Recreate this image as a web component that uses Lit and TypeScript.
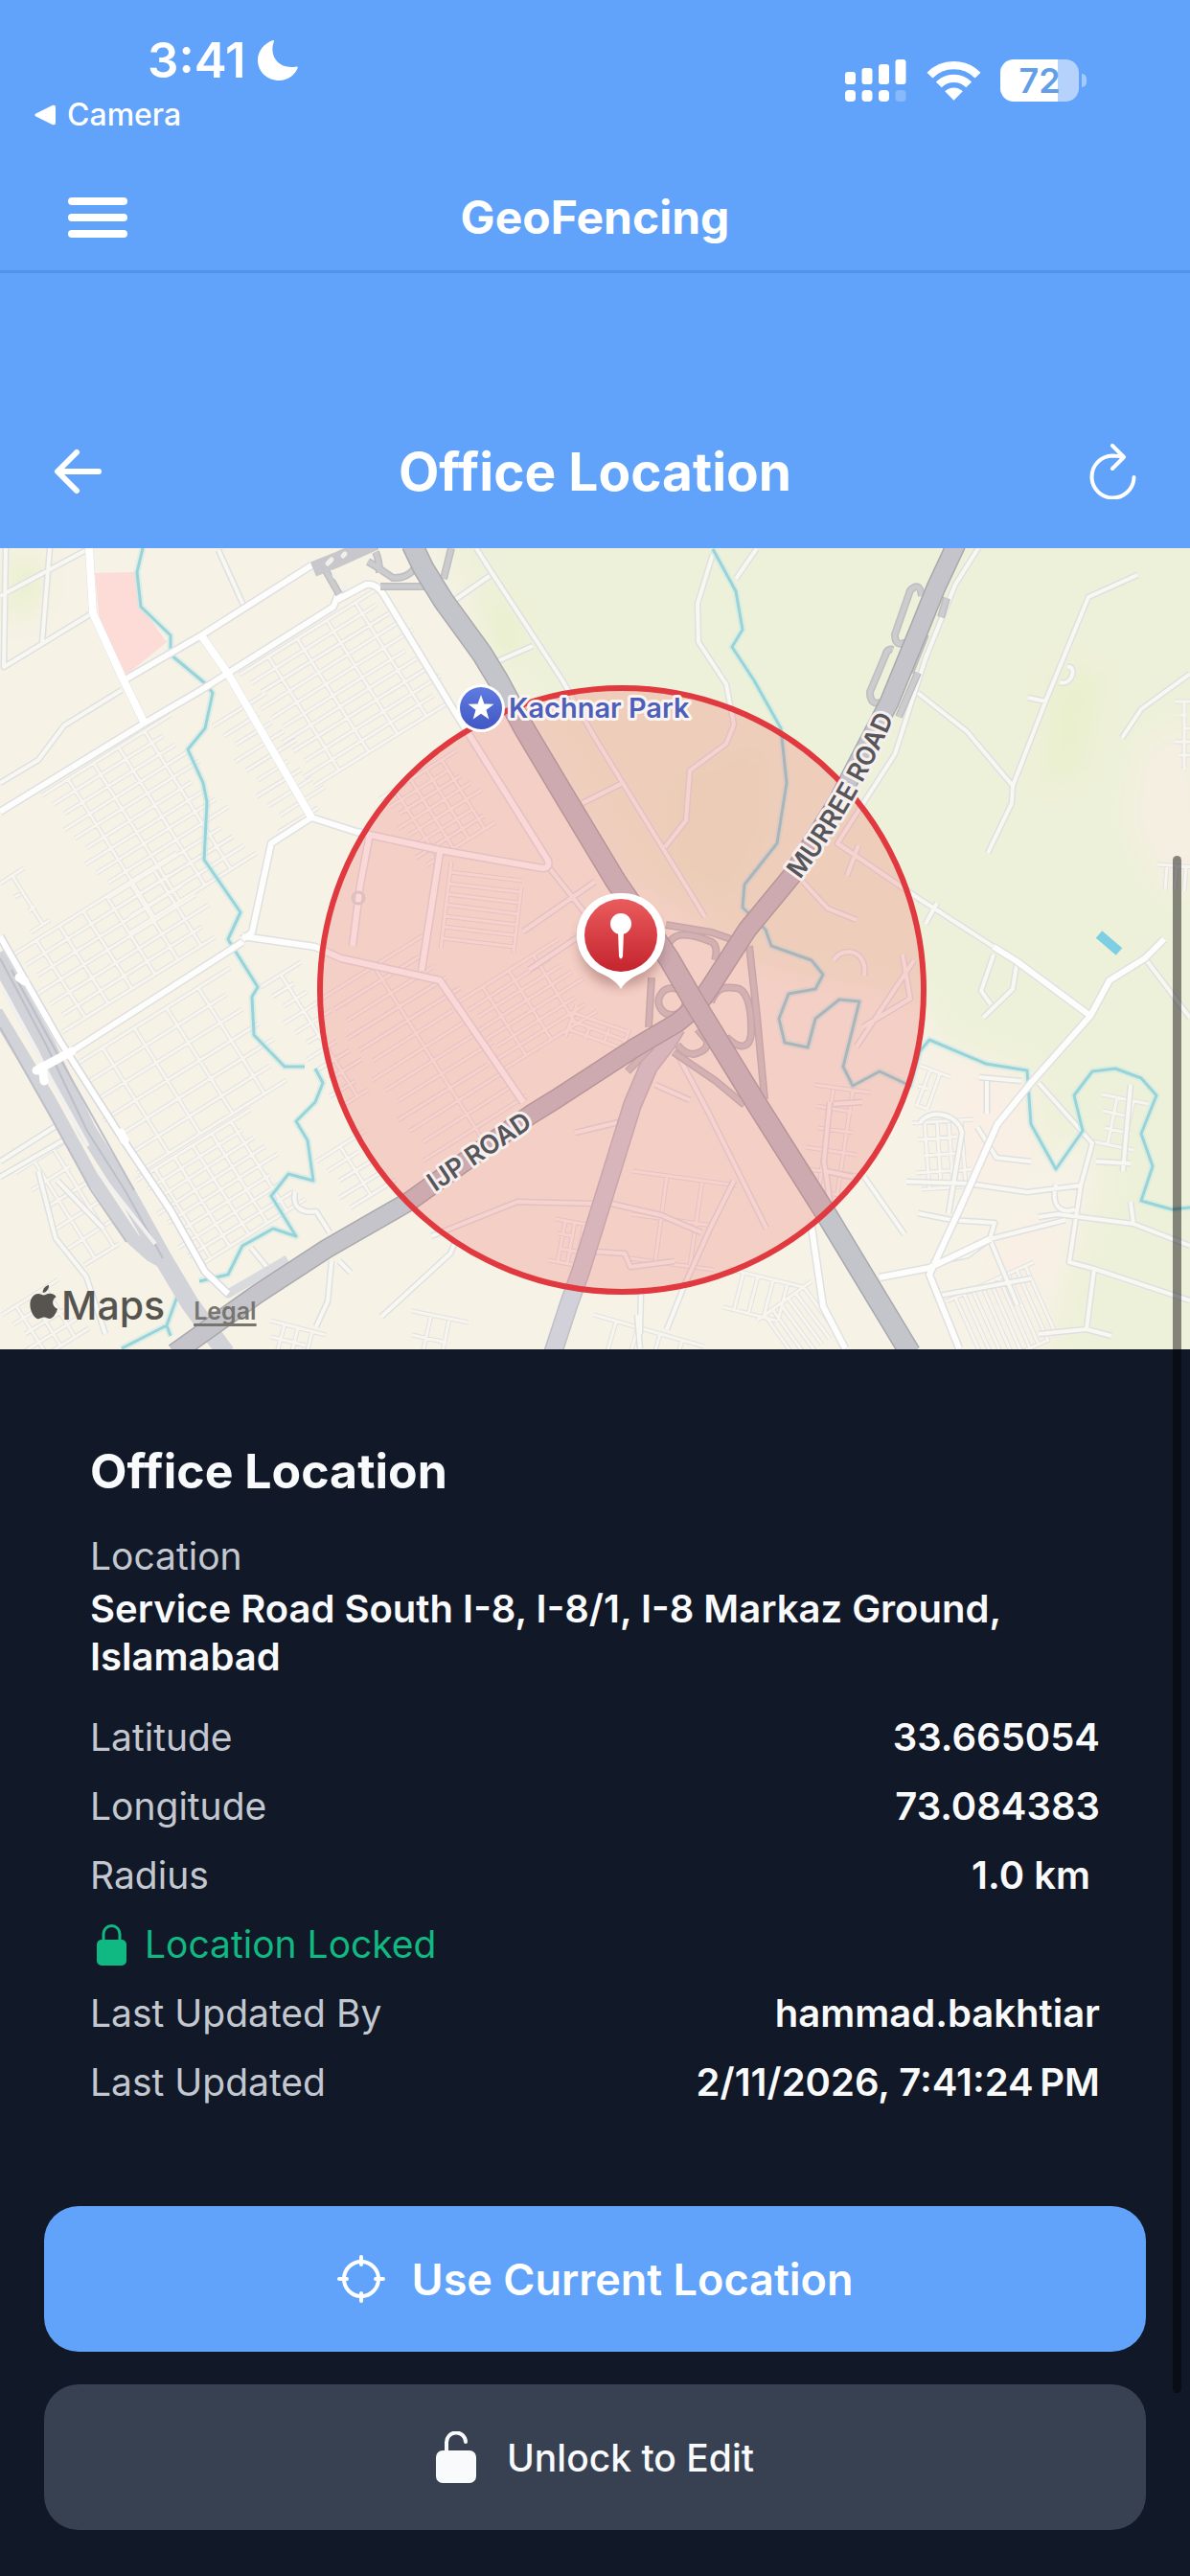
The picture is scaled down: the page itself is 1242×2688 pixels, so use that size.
import { LitElement, html, css, svg } from 'lit';
import { customElement, property } from 'lit/decorators.js';

type Block = [x: number, y: number, width: number, height: number, cols: number, rows: number, angle?: number];

// Residential blocks: origin, size, number of cross streets and of streets.
const BLOCKS: Block[] = [
  [250, 132, 178, 140, 4, 11],
  [44, 258, 158, 170, 4, 13],
  [222, 186, 66, 130, 0, 10],
  [396, 262, 96, 84, 4, 8],
  [336, 470, 128, 216, 1, 14],
  [478, 474, 124, 84, 3, 8],
  [460, 418, 92, 76, 7, 2, -83],
  [14, 424, 200, 96, 6, 7],
  [74, 542, 196, 130, 4, 7],
  [142, 660, 140, 110, 5, 9],
  [16, 652, 70, 120, 2, 6],
  [272, 458, 50, 150, 1, 11],
  [330, 640, 60, 60, 1, 5],
  [2, 800, 70, 60, 3, 5],
  [282, 806, 60, 50, 3, 4, 14],
  [430, 796, 60, 50, 2, 3, 12],
  [0, 350, 30, 60, 1, 4],
  [850, 560, 60, 110, 2, 6, 8],
  [952, 600, 64, 70, 4, 5, -4],
  [960, 540, 34, 40, 2, 3, 20],
  [1150, 570, 50, 50, 2, 4, 12],
  [988, 786, 100, 80, 9, 2, -24],
  [760, 752, 80, 40, 4, 2, 14],
  [660, 650, 110, 90, 2, 3, 8],
  [580, 700, 40, 44, 3, 4, 10],
  [620, 800, 120, 50, 4, 2, 16],
  [790, 806, 70, 60, 6, 1, -36],
  [1226, 160, 30, 70, 2, 6, 0],
  [1208, 330, 40, 26, 3, 1, 4],
  [590, 510, 36, 60, 3, 4, -70],
];

const LANES = [
  'M0 245 40 221 67 185 127 148', 'M497 0 513 25 587 138 621 198 736 385', 'M472 56 511 29', 'M519 118 556 102',
  'M228 2 257 66', 'M0 50 90 2', 'M6 0 4 124 96 68', 'M52 0 44 98',
  'M744 6 728 58 729 98 758 142 766 184 758 204 720 232 716 284 694 312', 'M790 0 768 32',
  'M608 266 648 246', 'M1021 0 997 38 966 115 934 215 874 308 958 365 1037 416',
  'M958 151 1009 191 1057 248 1056 266 1031 318', 'M1057 248 1092 158 1136 51 1187 28', 'M1073 156 1092 160',
  'M1106 140C1120 144 1124 122 1114 124', 'M1242 131 1191 168 1171 198', 'M896 310 884 342',
  'M838 348 864 376 894 388', 'M1037 424 1024 462 1034 476', 'M1061 434 1057 460 1026 490', 'M978 370 966 392',
  'M1195 428 1242 490', 'M942 424 950 470 900 500', 'M946 661 1010 663 1072 672 1128 665 1140 621 1084 558',
  'M1128 665 1116 745 1142 752 1242 785', 'M1142 752 1134 815', 'M1084 820 1134 815 1160 822',
  'M993 701 1038 704 1033 721 1062 790', 'M1084 698 1104 695 1183 705 1242 728', 'M1183 705 1180 682',
  'M1112 701 1033 721 1010 738 972 746', 'M980 780 1076 762', 'M902 656 944 716', 'M993 701 958 694',
  'M866 578 860 640 866 680 862 650 890 656', 'M870 580 900 578', 'M708 530 740 590 770 650 800 710',
  'M684 560 720 576', 'M766 660 742 708 714 770 696 815', 'M621 680 690 696 732 714', 'M621 734 652 736 658 750 704 744',
  'M450 718 540 682 621 684', 'M398 802 470 736 476 722', 'M354 744 366 756', 'M346 744 342 786 330 812',
  'M40 650 58 720 90 760 110 820', 'M60 660 108 710', 'M0 640 60 602', 'M0 656 66 618',
  'M308 672 C304 690 318 694 330 692 L344 714', 'M262 730 290 764', 'M1020 604 1040 636 1076 640',
  'M960 600 C970 584 1000 590 1004 610 L990 694', 'M1102 664C1096 690 1110 694 1122 690', 'M1030 556 1030 590',
  'M1022 552 1066 556', 'M1180 560 1172 650', 'M1144 640 1180 642', 'M870 430C880 414 906 420 902 446', 'M954 430 894 520',
  'M546 400 621 348', 'M552 440 606 404', 'M572 332 610 380', 'M600 610 650 598', 'M665 800 668 835', 'M669 776 668 820',
];

const STREETS = [
  'M0 275 150 183 210 148 348 61 356 41', 'M129 138 210 91 325 18', 'M325 281 283 308 263 401 253 408',
  'M325 281 372 296 459 315 566 334Q574 334 572 326L473 168 400 48Q392 36 382 38L352 54', 'M253 405 329 416 356 428 459 451 546 578',
  'M386 298 376 351 368 415', 'M459 318 440 441', 'M253 411 75 525 44 541', 'M847 708 859 791 882 835',
  'M1215 408 1195 428 1158 451 1138 488 1076 558 1041 601 1001 691 970 758 1001 835',
  'M1037 416 1061 431 1138 488', 'M918 761 970 751 1033 721',
];

const AVENUES = 'M93 0 97 68 129 138 150 181M210 91 238 131 325 281';

const RAMPS = [
  'M695 393 743 401 763 408', 'M695 420C700 402 712 398 743 411Q750 416 746 430', 'M782 415 790 488 798 575',
  'M742 474C748 456 760 458 768 459C780 460 784 480 784 500C785 524 772 524 758 510', 'M680 448 677 500',
  'M707 518Q714 528 724 528Q740 524 738 514L728 502', 'M703 526 747 556 777 581',
  'M702 459A14 14 0 1 1 701 459Z', 'M655 546 680 520',
  'M384 14 394 20 410 31Q424 32 432 22', 'M392 4Q396 12 396 26', 'M397 40 447 40', 'M471 0 463 32',
  'M338 20 354 48',
];

const LAY_BYS = 'M962 50Q960 34 950 44L934 90Q934 104 946 98M932 106Q926 104 924 112L908 150Q908 166 922 160M988 52 982 72M958 130 938 176M966 90 950 130';

const RIVERS = [
  'M149 0 143 25 147 61 178 91 178 111 214 141 222 151 214 188 196 210 212 245 216 265 213 325 251 380 238 408 246 421 269 458 263 468 265 508 297 541 318 541M329 543 337 558 329 578 309 598 321 618 327 660 301 653 283 676 309 718 285 710 253 728 238 758 208 765M186 778 174 811 127 835M174 811 178 822',
  'M744 1 768 45 775 85 764 103 787 138 815 188 821 245 811 308 777 351 775 375 799 398 805 415 847 430 859 445 851 460 823 465 813 491 819 516 843 521 851 491 876 471 897 473 890 501 880 541 890 561 918 546 950 561 960 525 970 513 1029 538 1072 545 1076 601 1102 648 1130 608 1121 571 1140 546 1164 543 1191 553 1207 571 1191 611 1203 645 1191 681 1223 690 1242 688',
];

const HIGHWAY = 'M430 -4 442 21 463 55 503 110 520 138 547 188 587 255 643 348 698 428 723 471 791 582 863 696 950 840';
const MURREE_ROAD = 'M998 -4 977 41 958 88 928 161 874 265 827 341 780 398 740 460Q727 480 707 495L663 521 580 575 554 591 428 681 341 731 269 778 182 840';
const SOUTH_ROAD = 'M706 500 697 515 677 541 660 581 633 668 606 755 594 788 577 840';

function blockPath([x, y, width, height, cols, rows, angle = -32]: Block) {
  const a = (angle * Math.PI) / 180;
  const ux = Math.cos(a);
  const uy = Math.sin(a);
  const point = (u: number, v: number) => `${Math.round(x + ux * u - uy * v)} ${Math.round(y + uy * u + ux * v)}`;
  let d = '';
  for (let i = 0; i < rows; i++) {
    const v = (height * i) / Math.max(rows - 1, 1);
    // ragged ends, so that a block does not read as a perfect grid
    d += `M${point((i % 3) * 5, v)}L${point(width - ((i * 7) % 4) * 6, v)}`;
  }
  for (let i = 0; i < cols; i++) {
    const u = (width * (i + 1)) / (cols + 1);
    d += `M${point(u, 0)}L${point(u, height)}`;
  }
  return d;
}

@customElement('geofence-map')
export class GeofenceMap extends LitElement {
  @property() place = '';

  static styles = css`
    :host {
      display: block;
      position: relative;
      overflow: hidden;
      background: #f6f2e6;
    }

    .map {
      display: block;
      width: 100%;
    }

    .line {
      fill: none;
      stroke-linejoin: round;
    }

    .place-name,
    .road-name {
      font-weight: 600;
      stroke-width: 6px;
      stroke-linejoin: round;
      paint-order: stroke;
    }

    .place-name {
      font-size: 29px;
      fill: #4c5fbd;
      stroke: #fbf4f0;
    }

    .road-name {
      font-size: 27px;
      fill: #55555a;
      stroke: #f6efee;
    }

    .attribution {
      position: absolute;
      left: 31px;
      bottom: 20px;
      display: flex;
      align-items: baseline;
      color: #55544f;
    }

    .apple {
      width: 29px;
      height: 36px;
      margin-right: 4px;
    }

    .brand {
      font-size: 41px;
      line-height: 52px;
      font-weight: 500;
    }

    .legal {
      margin-left: 30px;
      padding-bottom: 4px;
      font-size: 25px;
      font-weight: 600;
      color: #77756f;
      text-decoration-thickness: 3px;
      text-underline-offset: 4px;
      text-decoration-skip-ink: none;
    }
  `;

  render() {
    const blocks = BLOCKS.map(blockPath).join('');
    const lanes = LANES.join('');
    const streets = STREETS.join('');
    const ramps = RAMPS.join('');
    const rivers = RIVERS.join('');
    return html`
      <svg class="map" viewBox="0 0 1242 836" role="img" aria-label="Map of the office geofence">
        <defs>
          <linearGradient id="pin" x1="0" y1="0" x2="0" y2="1">
            <stop offset="0" stop-color="#ea5c5e" />
            <stop offset="1" stop-color="#c4242d" />
          </linearGradient>
          <linearGradient id="badge" x1="0" y1="0" x2="0" y2="1">
            <stop offset="0" stop-color="#5f7be0" />
            <stop offset="1" stop-color="#4157c4" />
          </linearGradient>
          <filter id="soft" x="-20%" y="-20%" width="140%" height="140%">
            <feGaussianBlur stdDeviation="14" />
          </filter>
          <filter id="shadow" x="-50%" y="-50%" width="200%" height="200%">
            <feGaussianBlur stdDeviation="6" />
          </filter>
          <path id="murree" d="M835 346Q898 262 940 160" />
        </defs>
        ${svg`
          <g filter="url(#soft)">
            <path fill="#eef1d9" d="M440 -40 560 190 650 340 740 400 800 440 960 470 980 516 1072 545 1090 640 1130 610 1150 660 1110 760 1080 880 1300 880 1300 -40Z" />
            <path fill="#ebeed2" d="M700 240 800 200 800 300 760 370 700 330Z" />
            <path fill="#e9f0cd" d="M500 50 540 70 540 130 510 110ZM8 6 46 10 40 60 8 80ZM1100 130 1150 130 1130 230 1090 250Z" />
            <path fill="#f5efe2" d="M1242 180 1190 210 1180 290 1220 360 1260 360Z" />
            <path fill="#f9efe4" d="M980 530 1070 556 1084 640 1000 670ZM1040 720 1110 700 1090 770 1030 780Z" />
          </g>
          <path fill="#fddcd8" d="M99 26 135 25 143 25 147 61 174 98 131 133 105 88Z" />

          <g class="line">
            <path stroke="#e2e1e4" stroke-width="5" d="${blocks}" />
            <path stroke="#f8f5ed" stroke-width="3" d="${blocks}" />
            <path stroke="#dfe0e3" stroke-width="7" d="${lanes}" />
            <path stroke="#f8f7f0" stroke-width="4" d="${lanes}" />
            <path stroke="#c6e9e7" stroke-width="7" opacity="0.5" d="${rivers}" />
            <path stroke="#97d3d9" stroke-width="3" d="${rivers}" />
            <path stroke="#e0e0e3" stroke-width="9" d="${streets}${AVENUES}" />
            <path stroke="#fdfdfc" stroke-width="6" d="${streets}" />
            <path stroke="#ffffff" stroke-width="8" d="${AVENUES}" />
            <circle cx="374" cy="365" r="6" stroke="#dedce2" stroke-width="3" />

            <path stroke="#d2d2d9" stroke-width="19" d="M-4 424 48 518 91 608 131 671 170 741 198 788 236 840" />
            <path stroke="#d2d2d9" stroke-width="14" d="M-4 484 51 575 95 655 139 721 158 738 176 748" />
            <path stroke="#bebec8" stroke-width="2" d="M0 428 48 518 91 608 131 671 170 741M12 440 60 528 140 670M0 500 51 590 95 670 132 724" />
            <path stroke="#f1f0ee" stroke-width="4" d="M4 462 52 552 92 624M102 650 162 726" />
            <path stroke="#d9dade" stroke-width="9" d="M0 405 63 515 127 615 178 691 214 755 238 778 300 742" />
            <path stroke="#ffffff" stroke-width="6" d="M0 405 63 515 127 615 178 691 214 755 238 778" />
            <path stroke="#ffffff" stroke-width="9" stroke-linecap="round" d="M75 525 38 545M44 541 46 556M20 448 26 452M126 610 130 618" />

            <path stroke="#bfbfc6" stroke-width="20" d="${SOUTH_ROAD}" />
            <path stroke="#d2d1d9" stroke-width="17" d="${SOUTH_ROAD}" />
            <path stroke="#bebdc0" stroke-width="8" d="${ramps}${LAY_BYS}" />
            <path stroke="#cccbce" stroke-width="5" d="${ramps}${LAY_BYS}" />
            <path stroke="#c8c8cc" stroke-width="16" d="M327 22 352 12 392 -6" />
            <path stroke="#f1f0ea" stroke-width="5" stroke-linecap="round" d="M342 16 346 12M349 28 350 30M358 8 360 6M358 42 360 40" />
            <path stroke="#a9a9ae" stroke-width="21" d="${MURREE_ROAD}" />
            <path stroke="#c4c4ca" stroke-width="18" d="${MURREE_ROAD}" />
            <path stroke="#a9a9ae" stroke-width="23" d="${HIGHWAY}" />
            <path stroke="#c4c4cb" stroke-width="20" d="${HIGHWAY}" />
            <path stroke="#7fcfe4" stroke-width="10" d="M1147 403 1168 421" />
          </g>

          <circle cx="649" cy="461" r="315" fill="#f04444" fill-opacity="0.2" stroke="#e0393f" stroke-width="6" />

          <text class="road-name"><textPath href="#murree">MURREE ROAD</textPath></text>
          <text class="road-name" transform="translate(454 672) rotate(-34)">IJP ROAD</text>

          <circle cx="502" cy="167" r="25" fill="#fff" />
          <circle cx="502" cy="167" r="22" fill="url(#badge)" />
          <path fill="#fff" d="M502 153 505.400 162.500 515.500 162.700 507.500 168.800 510.300 178.500 502 172.800 493.700 178.500 496.500 168.800 488.500 162.700 498.600 162.500Z" />
          <text class="place-name" x="531" y="177">${this.place}</text>

          <circle cx="648" cy="414" r="44" fill="#5b2020" opacity="0.3" filter="url(#shadow)" />
          <path fill="#fff" d="M648 360A44 44 0 0 1 666 445C658 449 652 453 648 460C644 453 638 449 630 445A44 44 0 0 1 648 360Z" />
          <circle cx="648" cy="404" r="38" fill="url(#pin)" />
          <circle cx="648" cy="392" r="11" fill="#fff" />
          <path fill="#fff" d="M645 400H651L650 426Q648 431 646 426Z" />
        `}
      </svg>
      <div class="attribution">
        <svg class="apple" viewBox="0 0 29 36" aria-hidden="true">
          <path fill="currentColor" d="M20 0C20.300 4 17 8 13.800 8C13.300 4 16.500 .6 20 0ZM14.600 10.600C16.200 10.600 18 8.800 21 8.800C24 8.800 26.400 10.400 27.600 12.200C22.400 15.200 23.200 22.600 29 24.800C27.800 28.600 24.800 34.800 21.200 35C18.800 35.200 18 33.600 15.200 33.600C12.400 33.600 11.400 35.200 9.200 35.200C5.200 35.200 .4 27.600 .4 20.400C.4 13.200 4.600 9 8.800 9C11.400 9 13.200 10.600 14.600 10.600Z" />
        </svg>
        <span class="brand">Maps</span>
        <a class="legal" href="#legal">Legal</a>
      </div>
    `;
  }
}

@customElement('app-root')
export class AppRoot extends LitElement {
  @property({ type: Object }) office = {
    name: 'Office Location',
    address: 'Service Road South I-8, I-8/1, I-8 Markaz Ground, Islamabad',
    coordinates: [
      ['Latitude', '33.665054'],
      ['Longitude', '73.084383'],
      ['Radius', '1.0 km\u00a0'],
    ],
    updates: [
      ['Last Updated By', 'hammad.bakhtiar'],
      ['Last Updated', '2/11/2026, 7:41:24\u202fPM'],
    ],
  };

  static styles = css`
    :host {
      display: block;
      position: relative;
      min-height: 100vh;
      background: #111827;
      color: #f9fafb;
      font-family: Inter, 'Liberation Sans', sans-serif;
    }

    h1,
    h2,
    p,
    dl,
    dd {
      margin: 0;
    }

    button {
      display: flex;
      align-items: center;
      justify-content: center;
      border: 0;
      padding: 0;
      background: none;
      color: inherit;
      font: inherit;
    }

    svg {
      display: block;
      flex: none;
    }

    .top {
      background: #61a3fa;
      color: #fff;
    }

    .status {
      display: flex;
      justify-content: space-between;
      box-sizing: border-box;
      height: 172px;
      padding: 33px 108px 0 36px;
    }

    .clock {
      display: flex;
      align-items: center;
      gap: 12px;
      padding-left: 118px;
      font-size: 51px;
      line-height: 60px;
      font-weight: 600;
    }

    .back-to {
      display: flex;
      align-items: center;
      gap: 12px;
      color: inherit;
      text-decoration: none;
      font-size: 32px;
      line-height: 54px;
      font-weight: 500;
    }

    .indicators {
      display: flex;
      align-items: center;
      height: 102px;
    }

    .wifi {
      margin: 0 20px;
    }

    .battery {
      display: flex;
      align-items: center;
      justify-content: center;
      width: 82px;
      height: 44px;
      border-radius: 14px;
      background: linear-gradient(90deg, #fff 73%, #b4d2fc 73%);
      color: #629fe8;
      font-size: 36px;
      font-weight: 600;
    }

    .battery-cap {
      width: 5px;
      height: 14px;
      margin-left: 3px;
      border-radius: 0 5px 5px 0;
      background: #a4cafc;
    }

    .bar {
      display: grid;
      grid-template-columns: 64px 1fr 64px;
      align-items: center;
    }

    .app-bar {
      height: 110px;
      padding: 0 70px;
      border-bottom: 3px solid #5193e6;
    }

    .page-bar {
      height: 161px;
      padding: 126px 49px 0;
    }

    .bar h1,
    .bar h2 {
      text-align: center;
      font-weight: 700;
    }

    .app-bar h1 {
      font-size: 48px;
      line-height: 60px;
    }

    .page-bar h2 {
      font-size: 55px;
      line-height: 68px;
    }

    .details {
      padding: 97px 94px 105px;
      font-size: 40px;
      line-height: 48px;
    }

    .details h2 {
      margin-bottom: 35px;
      font-size: 50px;
      line-height: 60px;
      font-weight: 700;
    }

    .label,
    .locked {
      font-size: 39px;
    }

    .label {
      color: #c3c8d0;
    }

    .value {
      font-weight: 600;
    }

    .address {
      margin: 6px 0 35px;
      line-height: 50px;
    }

    .rows {
      display: grid;
      gap: 24px;
    }

    .row {
      display: flex;
      justify-content: space-between;
    }

    .locked {
      display: flex;
      align-items: center;
      gap: 19px;
      margin: 24px 0;
      padding-left: 7px;
      color: #10b981;
    }

    .actions {
      display: grid;
      gap: 34px;
      padding: 0 46px 48px;
    }

    .actions button {
      height: 152px;
      border-radius: 36px;
    }

    .actions .primary {
      gap: 28px;
      background: #61a3fa;
      color: #fff;
      font-size: 45px;
      font-weight: 600;
    }

    .actions .secondary {
      gap: 32px;
      background: #374151;
      font-size: 39px;
      font-weight: 500;
    }

    .scrollbar {
      position: absolute;
      top: 893px;
      right: 9px;
      width: 9px;
      height: 1604px;
      border-radius: 5px;
      background: rgba(0, 0, 0, 0.45);
    }
  `;

  renderRow([label, value]: string[]) {
    return html`
      <div class="row">
        <dt class="label">${label}</dt>
        <dd class="value">${value}</dd>
      </div>
    `;
  }

  renderStatus() {
    return html`
      <div class="status">
        <div>
          <div class="clock">
            <span>3:41</span>
            <svg width="42" height="42" viewBox="0 0 42 42" aria-hidden="true">
              <path fill="#fff" d="M16 0C17.500 0 17 1 16.500 2.500C12.500 14 19 29 37 28C41 27.500 42.500 27 41.500 29.500C38 37 31 42 22.500 42C10 42 0 33 0 20.500C0 11 7 3 16 0Z" />
            </svg>
          </div>
          <a class="back-to" href="#camera">
            <svg width="22" height="22" viewBox="0 0 22 22" aria-hidden="true">
              <path fill="#fff" d="M1.500 9.500 19 .8Q22 0 22 3V19Q22 22 19 21.200L1.500 12.500Q-.8 11 1.500 9.500Z" />
            </svg>
            Camera
          </a>
        </div>
        <div class="indicators">
          <svg width="65" height="44" viewBox="0 0 65 44" aria-hidden="true">
            <g fill="#fff">
              <rect x="0" y="13" width="11" height="13" rx="3" />
              <rect x="17.500" y="9" width="11" height="17" rx="3" />
              <rect x="35" y="5" width="11" height="21" rx="3" />
              <rect x="52.500" y="0" width="11" height="26" rx="3" />
              <rect x="0" y="32" width="11" height="12" rx="4" />
              <rect x="17.500" y="32" width="11" height="12" rx="4" />
              <rect x="35" y="32" width="11" height="12" rx="4" />
              <rect x="52.500" y="32" width="11" height="12" rx="4" opacity="0.25" />
            </g>
          </svg>
          <svg class="wifi" width="57" height="42" viewBox="0 0 58 42" aria-hidden="true">
            <g fill="none" stroke="#fff" stroke-width="8.500">
              <path d="M3.500 15.500A36 36 0 0 1 54.500 15.500" />
              <path d="M13 25.500A22.500 22.500 0 0 1 45 25.500" />
            </g>
            <path fill="#fff" d="M29 42 19.500 32.500A13.500 13.500 0 0 1 38.500 32.500Z" />
          </svg>
          <div class="battery">72</div>
          <div class="battery-cap"></div>
        </div>
      </div>
    `;
  }

  render() {
    return html`
      <header class="top">
        ${this.renderStatus()}
        <nav class="bar app-bar">
          <button aria-label="Menu">
            <svg width="62" height="42" viewBox="0 0 62 42" aria-hidden="true">
              <path stroke="#fff" stroke-width="8" stroke-linecap="round" d="M4 4H58M4 21H58M4 38H58" />
            </svg>
          </button>
          <h1>GeoFencing</h1>
        </nav>
        <div class="bar page-bar">
          <button aria-label="Back">
            <svg width="50" height="46" viewBox="0 0 50 46" fill="none" stroke="#fff" stroke-width="6" stroke-linecap="round" stroke-linejoin="round" aria-hidden="true">
              <path d="M24 3 4 23 24 43M5 23H47" />
            </svg>
          </button>
          <h2>${this.office.name}</h2>
          <button aria-label="Refresh">
            <svg width="50" height="58" viewBox="0 0 50 58" fill="none" stroke="#fff" stroke-width="4" stroke-linecap="round" stroke-linejoin="round" aria-hidden="true">
              <path d="M25 2 37 14 25 26M36 14Q31 12.500 25 12.500A22 22 0 1 0 47.500 35" />
            </svg>
          </button>
        </div>
      </header>

      <geofence-map place="Kachnar Park"></geofence-map>

      <section class="details">
        <h2>${this.office.name}</h2>
        <p class="label">Location</p>
        <p class="value address">${this.office.address}</p>
        <dl class="rows">${this.office.coordinates.map(this.renderRow)}</dl>
        <p class="locked">
          <svg width="31" height="44" viewBox="0 0 31 44" aria-hidden="true">
            <path fill="none" stroke="currentColor" stroke-width="3" d="M7 20V11A8.500 8.500 0 0 1 24 11V20" />
            <rect y="17" width="31" height="27" rx="5" fill="currentColor" />
          </svg>
          Location Locked
        </p>
        <dl class="rows">${this.office.updates.map(this.renderRow)}</dl>
      </section>

      <div class="actions">
        <button class="primary">
          <svg width="50" height="50" viewBox="0 0 50 50" fill="none" stroke="#fff" stroke-width="4" stroke-linecap="round" aria-hidden="true">
            <circle cx="25" cy="25" r="18" />
            <path d="M25 2V10M25 40V48M2 25H10M40 25H48" />
          </svg>
          Use Current Location
        </button>
        <button class="secondary">
          <svg width="42" height="54" viewBox="0 0 42 54" aria-hidden="true">
            <path fill="none" stroke="currentColor" stroke-width="4" stroke-linecap="round" d="M11 22V12A10 10 0 0 1 31 11" />
            <rect y="20" width="42" height="34" rx="7" fill="currentColor" />
          </svg>
          Unlock to Edit
        </button>
      </div>
      <div class="scrollbar"></div>
    `;
  }
}
